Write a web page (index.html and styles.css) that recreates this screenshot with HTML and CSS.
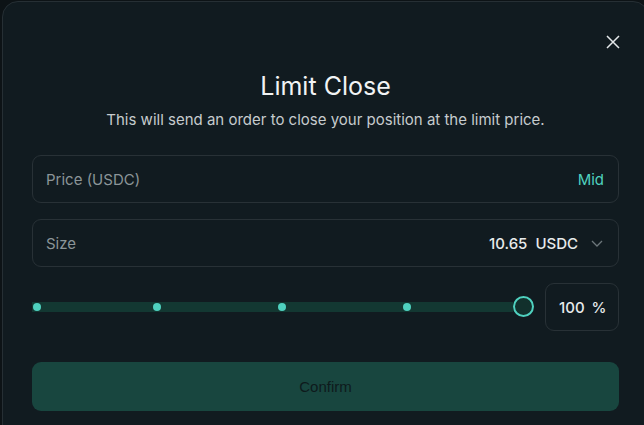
FILE: index.html
```html
<!DOCTYPE html>
<html>
<head>
<meta charset="utf-8">
<link rel="stylesheet" href="styles.css">
</head>
<body>
<div class="modal">
  <button class="close" aria-label="Close">
    <svg width="14" height="14" viewBox="0 0 14 14"><path d="M1 1L13 13M13 1L1 13" stroke="#e4e8ea" stroke-width="1.5" fill="none"/></svg>
  </button>
  <h1 class="title">Limit Close</h1>
  <p class="subtitle">This will send an order to close your position at the limit price.</p>
  <div class="field field-price">
    <span class="label">Price (USDC)</span>
    <span class="mid">Mid</span>
  </div>
  <div class="field field-size">
    <span class="label">Size</span>
    <span class="value">
      <span class="num">10.65</span>
      <span class="unit">USDC</span>
      <svg class="chev" width="12" height="7" viewBox="0 0 12 7"><path d="M1 1L6 6L11 1" stroke="#6d777b" stroke-width="1.3" fill="none"/></svg>
    </span>
  </div>
  <div class="slider-row">
    <div class="slider">
      <div class="track"></div>
      <span class="dot" style="left:5px"></span>
      <span class="dot" style="left:125px"></span>
      <span class="dot" style="left:250px"></span>
      <span class="dot" style="left:375px"></span>
      <span class="knob" style="left:491.5px"></span>
    </div>
    <div class="pct"><span>100</span><span>%</span></div>
  </div>
  <button class="confirm">Confirm</button>
</div>
</body>
</html>
```
FILE: styles.css
```css
html, body {
  margin: 0;
  padding: 0;
  background: #0d1316;
  overflow: hidden;
}
body {
  font-family: Inter, "Noto Sans", sans-serif;
  padding: 1px 0 0 2px;
}
.modal {
  position: relative;
  box-sizing: border-box;
  width: 647px;
  height: 440px;
  background: #111b20;
  border: 1px solid #262f34;
  border-radius: 16px;
  padding: 69px 29px 0 29px;
  display: flex;
  flex-direction: column;
}
.close {
  position: absolute;
  top: 33px;
  right: 28px;
  width: 14px;
  height: 14px;
  padding: 0;
  border: 0;
  background: transparent;
  display: flex;
}
.title {
  margin: 0;
  font-size: 25px;
  line-height: 30px;
  font-weight: 400;
  color: #f1f3f4;
  text-align: center;
}
.subtitle {
  margin: 9px 0 0;
  font-size: 15px;
  line-height: 20px;
  color: #c6ccce;
  text-align: center;
}
.field {
  box-sizing: border-box;
  height: 48px;
  border: 1px solid #283136;
  border-radius: 9px;
  padding: 0 14px 0 13px;
  display: flex;
  align-items: center;
  justify-content: space-between;
  font-size: 15px;
}
.field-price {
  margin-top: 25px;
}
.field-size {
  margin-top: 16px;
}
.label {
  color: #8b9598;
}
.mid {
  color: #4fd1bf;
}
.value {
  display: flex;
  align-items: center;
  color: #e8ebec;
  font-weight: 500;
}
.unit {
  margin-left: 8px;
}
.chev {
  margin-left: 13px;
  margin-right: 1px;
}
.slider-row {
  margin-top: 16px;
  display: flex;
  align-items: center;
  gap: 12px;
  height: 48px;
}
.slider {
  position: relative;
  flex: 1;
  height: 22px;
}
.track {
  position: absolute;
  left: 0;
  right: 20px;
  top: 6px;
  height: 10px;
  background: #133832;
}
.dot {
  position: absolute;
  top: 7px;
  width: 8px;
  height: 8px;
  margin-left: -4px;
  border-radius: 50%;
  background: #4fd1bf;
}
.knob {
  position: absolute;
  top: 0;
  box-sizing: border-box;
  width: 21px;
  height: 21px;
  margin-left: -10.5px;
  border-radius: 50%;
  border: 2px solid #4fd1bf;
  background: #12302c;
}
.pct {
  box-sizing: border-box;
  width: 74px;
  height: 48px;
  border: 1px solid #283136;
  border-radius: 9px;
  display: flex;
  align-items: center;
  gap: 7px;
  padding-left: 13px;
  font-size: 15px;
  font-weight: 500;
  color: #e8ebec;
}
.confirm {
  margin-top: 31px;
  height: 49px;
  border: 0;
  border-radius: 9px;
  background: #18463f;
  color: #0e1a1c;
  font-family: "Liberation Sans", Arial, sans-serif;
  font-size: 15px;
  padding: 0;
}
```
